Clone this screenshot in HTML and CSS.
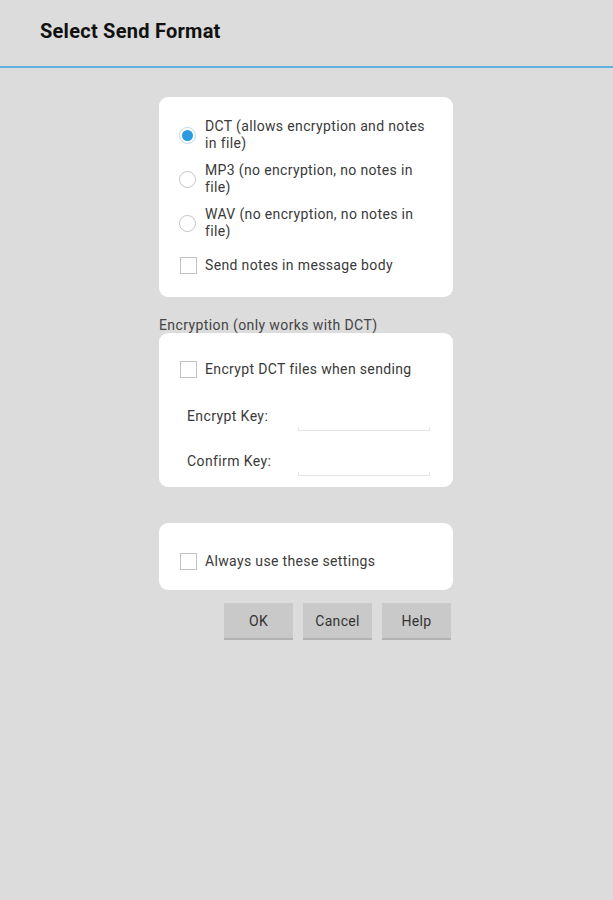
FILE: index.html
```html
<!DOCTYPE html>
<html>
<head>
<meta charset="UTF-8">
<title>Select Send Format</title>
<link rel="stylesheet" href="styles.css">
</head>
<body>

<div class="titlebar">
	<h1>Select Send Format</h1>
</div>

<div class="dialog">

	<div class="card card-format">
		<label class="opt">
			<span class="radio on"></span>
			<span class="txt">DCT (allows encryption and notes<br>in file)</span>
		</label>
		<label class="opt">
			<span class="radio"></span>
			<span class="txt">MP3 (no encryption, no notes in<br>file)</span>
		</label>
		<label class="opt">
			<span class="radio"></span>
			<span class="txt">WAV (no encryption, no notes in<br>file)</span>
		</label>
		<label class="opt opt-check">
			<span class="check"></span>
			<span class="txt">Send notes in message body</span>
		</label>
	</div>

	<div class="section">Encryption (only works with DCT)</div>

	<div class="card card-crypt">
		<label class="opt">
			<span class="check"></span>
			<span class="txt">Encrypt DCT files when sending</span>
		</label>
		<div class="keyrow">
			<span class="keylabel">Encrypt Key:</span>
			<span class="keyinput"></span>
		</div>
		<div class="keyrow">
			<span class="keylabel">Confirm Key:</span>
			<span class="keyinput"></span>
		</div>
	</div>

	<div class="card card-always">
		<label class="opt">
			<span class="check"></span>
			<span class="txt">Always use these settings</span>
		</label>
	</div>

	<div class="buttons">
		<button type="button" class="btn">OK</button>
		<button type="button" class="btn">Cancel</button>
		<button type="button" class="btn">Help</button>
	</div>

</div>

</body>
</html>
```

FILE: styles.css
```css
html, body {margin: 0; padding: 0; background: #dcdcdc;}
body {font-family: Roboto, "Liberation Sans", sans-serif; color: #3a3a3a; width: 613px; height: 900px;}

.titlebar {height: 66px; border-bottom: 2px solid #5db3de; box-sizing: content-box;}
.titlebar h1 {margin: 0; padding: 19px 0 0 40px; font-size: 20px; letter-spacing: 0.25px; font-weight: bold; color: #111; line-height: 24px;}

.dialog {width: 294px; margin: 29px 0 0 159px;}

.card {background: #fff; border-radius: 9px; box-sizing: border-box;}
.card-format {height: 200px; padding: 21px 0 0 20px;}
.card-crypt {height: 154px; padding: 28px 0 0 20px;}
.card-always {height: 67px; padding: 30px 0 0 20px; margin-top: 36px;}

.opt {display: flex; align-items: center; font-size: 14px; letter-spacing: 0.35px; line-height: 17px; margin-bottom: 10px;}
.opt .txt {margin-left: 9px;}
.opt-check {margin-top: 17px;}

.radio {width: 15px; height: 15px; border: 1px solid #c4c4c4; border-radius: 50%; flex: none; position: relative; background: #fff;}
.radio.on {border-color: #b9d7ea;}
.radio.on::after {content: ""; position: absolute; left: 2px; top: 2px; width: 11px; height: 11px; border-radius: 50%; background: #2a9be0;}

.check {width: 15px; height: 15px; border: 1px solid #c2c2c2; flex: none; margin-left: 1px; margin-right: -1px;}

.section {font-size: 14px; letter-spacing: 0.4px; color: #444; line-height: 16px; margin: 20px 0 0 0;}

.card-crypt .opt {margin-bottom: 0;}
.keyrow {display: flex; align-items: flex-start; margin: 22px 0 0 8px;}
.card-crypt .opt + .keyrow {margin-top: 30px;}
.keylabel {font-size: 14px; letter-spacing: 0.4px; width: 111px; line-height: 17px;}
.keyinput {width: 130px; height: 3px; margin-top: 19px; border-bottom: 1px solid #e4e4e4; border-left: 1px solid #e8e8e8; border-right: 1px solid #e8e8e8;}

.buttons {display: flex; justify-content: flex-end; gap: 10px; margin: 13px 2px 0 0;}
.btn {width: 69px; height: 35px; border: none; background: #c9c9c9; box-shadow: 0 2px 0 #b2b2b2; font-family: Roboto, "Liberation Sans", sans-serif; font-size: 14px; letter-spacing: 0.3px; color: #333; padding: 0;}
```
